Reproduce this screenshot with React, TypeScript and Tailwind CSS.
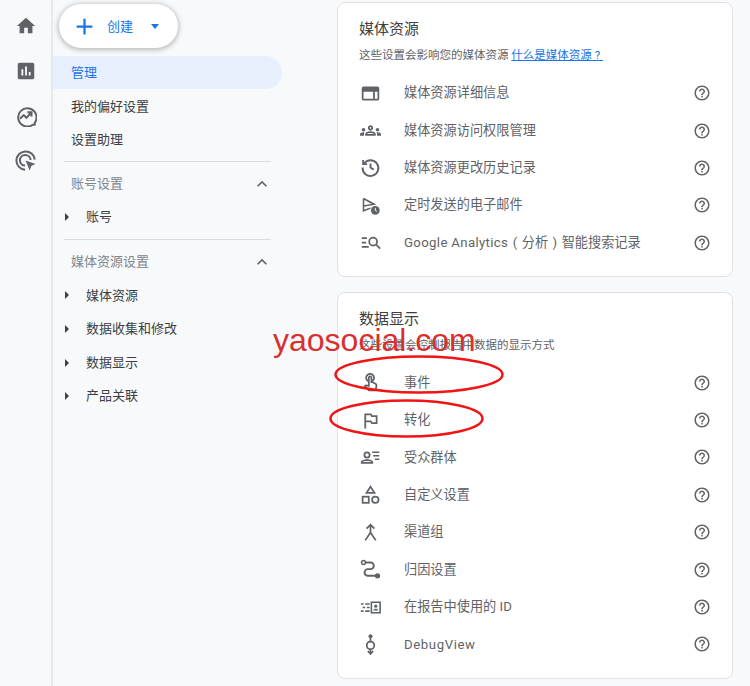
import type { ReactNode } from "react";

const iconCls = "w-full h-full";

const Fill = ({ d }: { d: string }) => (
  <svg viewBox="0 0 24 24" className={iconCls} fill="currentColor"><path d={d} /></svg>
);

const Line = ({ children, width = 2 }: { children: ReactNode; width?: number }) => (
  <svg viewBox="0 0 24 24" className={iconCls} fill="none" stroke="currentColor" strokeWidth={width}>{children}</svg>
);

const HelpIcon = () => (
  <Fill d="M11 18h2v-2h-2v2zm1-16C6.48 2 2 6.48 2 12s4.48 10 10 10 10-4.48 10-10S17.52 2 12 2zm0 18c-4.41 0-8-3.59-8-8s3.59-8 8-8 8 3.59 8 8-3.59 8-8 8zm0-14c-2.21 0-4 1.79-4 4h2c0-1.1.9-2 2-2s2 .9 2 2c0 2-3 1.75-3 5h2c0-2.25 3-2.5 3-5 0-2.21-1.79-4-4-4z" />
);

// parens sit centered in a full-width cell in the reference
const Cell = ({ children }: { children: string }) => (
  <span className="inline-block text-center w-[13.500px]">{children}</span>
);

const propertyRows: { id: string; label: ReactNode; icon: ReactNode }[] = [
  {
    id: "details",
    label: "媒体资源详细信息",
    icon: (
      <svg viewBox="0 0 24 24" className={iconCls} fill="currentColor">
        <path d="M4 4h16a2 2 0 0 1 2 2v12a2 2 0 0 1-2 2H4a2 2 0 0 1-2-2V6a2 2 0 0 1 2-2zm0 6v8h11v-8H4zm13 0v8h3v-8h-3z" fillRule="evenodd" />
      </svg>
    ),
  },
  {
    id: "access",
    label: "媒体资源访问权限管理",
    icon: (
      <Fill d="M4 13c1.1 0 2-.9 2-2s-.9-2-2-2-2 .9-2 2 .9 2 2 2zm1.13 1.1c-.37-.06-.74-.1-1.13-.1-.99 0-1.93.21-2.78.58C.48 14.9 0 15.62 0 16.43V18h4.5v-1.61c0-.83.23-1.61.63-2.29zM20 13c1.1 0 2-.9 2-2s-.9-2-2-2-2 .9-2 2 .9 2 2 2zm4 3.43c0-.81-.48-1.53-1.22-1.85-.85-.37-1.79-.58-2.78-.58-.39 0-.76.04-1.13.1.4.68.63 1.46.63 2.29V18H24v-1.57zm-7.76-2.78c-1.17-.52-2.61-.9-4.24-.9-1.63 0-3.07.39-4.24.9C6.68 14.13 6 15.21 6 16.39V18h12v-1.61c0-1.18-.68-2.26-1.76-2.74zM8.07 16c.09-.23.13-.39.91-.69.97-.38 1.99-.56 3.02-.56s2.05.18 3.02.56c.77.3.81.46.91.69H8.07zM12 8c.55 0 1 .45 1 1s-.45 1-1 1-1-.45-1-1 .45-1 1-1m0-2c-1.66 0-3 1.34-3 3s1.34 3 3 3 3-1.34 3-3-1.34-3-3-3z" />
    ),
  },
  {
    id: "history",
    label: "媒体资源更改历史记录",
    icon: (
      <Line width={2.2}>
        <path d="M4.6 7.5A9 9 0 1 1 3 12" />
        <path d="M3.6 3.5v4.6h4.6" />
        <path d="M12 7.5V12l3.6 2.4" />
      </Line>
    ),
  },
  {
    id: "emails",
    label: "定时发送的电子邮件",
    icon: (
      <svg viewBox="0 0 24 24" className={iconCls}>
        <path d="M4 4v14l8-3M4 4l12 6.500L4 12.500" fill="none" stroke="currentColor" strokeWidth="1.800" />
        <circle cx="17.500" cy="17.500" r="5" fill="currentColor" />
        <path d="M17.500 14.800v2.900l1.800 1" fill="none" stroke="#fff" strokeWidth="1.100" />
      </svg>
    ),
  },
  {
    id: "search",
    label: (
      <>
        <span className="tracking-[0.35px]">Google Analytics</span>
        <Cell>(</Cell>分析<Cell>)</Cell>智能搜索记录
      </>
    ),
    icon: (
      <Line>
        <path d="M2 7h6M2 12h5M2 17h8" />
        <circle cx="15" cy="11" r="4.500" />
        <path d="M18.500 14.500L23 19" />
      </Line>
    ),
  },
];

const displayRows: { id: string; label: ReactNode; icon: ReactNode }[] = [
  {
    id: "events",
    label: "事件",
    icon: (
      <Fill d="M18.190 12.440l-3.240-1.620c1.290-1 2.120-2.560 2.120-4.320 0-3.030-2.470-5.500-5.500-5.500s-5.500 2.470-5.500 5.500c0 2.130 1.220 3.980 3 4.890v3.260c-2.150-.46-2.020-.44-2.260-.44-.53 0-1.030.21-1.410.59L4 16.220l5.090 5.090C9.520 21.750 10.120 22 10.740 22h6.300c.98 0 1.810-.7 1.970-1.670l.8-4.710c.22-1.300-.43-2.580-1.620-3.180zm-.35 2.850l-.8 4.710h-6.300c-.09 0-.17-.04-.24-.1l-3.680-3.680 4.250.89V6.500c0-.28.22-.5.5-.5s.5.22.5.5v6h1.760l3.460 1.730c.4.2.62.63.55 1.060zM8.070 6.500c0-1.930 1.570-3.500 3.500-3.500s3.500 1.570 3.500 3.500c0 .95-.38 1.810-1 2.440V6.500c0-1.380-1.120-2.500-2.500-2.500s-2.500 1.120-2.500 2.500v2.440c-.62-.63-1-1.490-1-2.440z" />
    ),
  },
  {
    id: "conversions",
    label: "转化",
    icon: <Fill d="M14 6l-1-2H5v17h2v-7h5l1 2h7V6h-6zm4 8h-4l-1-2H7V6h5l1 2h5v6z" />,
  },
  {
    id: "audiences",
    label: "受众群体",
    icon: (
      <svg viewBox="0 0 24 24" className={iconCls} fill="currentColor">
        <circle cx="8" cy="9" r="3" fill="none" stroke="currentColor" strokeWidth="2" />
        <path d="M1 19v-1.500C1 15 5 14 8 14s7 1 7 3.500V19H1zm2-2h10c-.4-.6-2.600-1-5-1s-4.600.4-5 1z" fillRule="evenodd" />
        <path d="M14 5h8v1.800h-8zM15 9h7v1.800h-7zM17 13h5v1.800h-5z" />
      </svg>
    ),
  },
  {
    id: "custom",
    label: "自定义设置",
    icon: (
      <Line>
        <path d="M12 3l4.500 7h-9z" />
        <rect x="3" y="14.500" width="7" height="7" />
        <circle cx="17.500" cy="18" r="3.700" />
      </Line>
    ),
  },
  {
    id: "channels",
    label: "渠道组",
    icon: (
      <Line>
        <path d="M12 3v9l-6 9M12 12l6 9M7.500 7.500L12 3l4.500 4.500" />
      </Line>
    ),
  },
  {
    id: "attribution",
    label: "归因设置",
    icon: (
      <svg viewBox="0 0 24 24" className={iconCls}>
        <path d="M6 4h6a3.800 3.800 0 0 1 0 7.600H9a3.800 3.800 0 0 0 0 7.600h9" fill="none" stroke="currentColor" strokeWidth="2.200" />
        <circle cx="4" cy="4" r="2.300" fill="#fff" stroke="currentColor" strokeWidth="1.800" />
        <circle cx="20" cy="19.200" r="3" fill="currentColor" />
      </svg>
    ),
  },
  {
    id: "ids",
    label: "在报告中使用的 ID",
    icon: (
      <svg viewBox="0 0 24 24" className={iconCls} fill="currentColor">
        <path d="M1 7h3v1.800H1zM6 7h5v1.800H6zM3 11.100h3v1.800H3zM8 11.100h3v1.800H8zM1 15.200h3V17H1zM6 15.200h5V17H6z" />
        <rect x="13" y="6" width="10" height="12" fill="none" stroke="currentColor" strokeWidth="1.800" />
        <circle cx="18" cy="10.500" r="1.800" />
        <path d="M15 15.500c.4-1.500 1.600-2 3-2s2.600.5 3 2z" />
      </svg>
    ),
  },
  {
    id: "debug",
    label: <span className="tracking-[0.6px]">DebugView</span>,
    icon: (
      <svg viewBox="0 0 24 24" className={iconCls} fill="none" stroke="currentColor" strokeWidth="2">
        <path d="M12 2v7M12 17v6" />
        <circle cx="12" cy="2.500" r="2.300" fill="currentColor" stroke="none" />
        <circle cx="12" cy="13" r="4.300" />
        <path d="M9 19.500l3 3 3-3" />
      </svg>
    ),
  },
];

const railIcons: { key: string; icon: ReactNode }[] = [
  { key: "home", icon: <Fill d="M10 20v-6h4v6h5v-8h3L12 3 2 12h3v8z" /> },
  {
    key: "reports",
    icon: (
      <Fill d="M19 3H5c-1.100 0-2 .9-2 2v14c0 1.100.9 2 2 2h14c1.100 0 2-.9 2-2V5c0-1.100-.9-2-2-2zM9 17H7v-7h2v7zm4 0h-2V7h2v10zm4 0h-2v-4h2v4z" />
    ),
  },
  {
    key: "explore",
    icon: (
      <Line width={2.200}>
        <path d="M21.500 19.500A10 10 0 1 0 19.500 21.500h2z" />
        <path d="M5.500 15l4-4 3 3 5-5.500M13.500 8h4.500v4.500" />
      </Line>
    ),
  },
  {
    key: "advertising",
    icon: (
      <svg viewBox="0 0 24 24" className={iconCls}>
        <path d="M11 21.500a10 10 0 1 1 10.500-11" fill="none" stroke="currentColor" strokeWidth="2.200" />
        <path d="M11 17a5.800 5.800 0 1 1 6-6" fill="none" stroke="currentColor" strokeWidth="2.200" />
        <path d="M11.500 11.500l11 3.800-4.500 2-2 5z" fill="currentColor" />
      </svg>
    ),
  },
];

const Chevron = () => (
  <svg viewBox="0 0 24 24" className="w-[20px] h-[20px] text-[#5f6368]" fill="currentColor">
    <path d="M12 8l-6 6 1.410 1.410L12 10.830l4.590 4.580L18 14z" />
  </svg>
);

const TreeItem = ({ label }: { label: string }) => (
  <div className="flex items-center h-[33.600px] pl-[12px] text-[13px] text-[#3c4043]">
    <span className="w-0 h-0 border-y-[4px] border-y-transparent border-l-[4px] border-l-[#3c4043]" />
    <span className="ml-[17px]">{label}</span>
  </div>
);

const Row = ({ label, icon }: { label: ReactNode; icon: ReactNode }) => (
  <div className="flex items-center h-[37.400px] text-[#5f6368]">
    <div className="ml-[1px] w-[21px] h-[21px] shrink-0">{icon}</div>
    <span className="ml-[23px] flex-1 text-[13.200px]">{label}</span>
    <div className="w-[18px] h-[18px] shrink-0">
      <HelpIcon />
    </div>
  </div>
);

const Card = ({ title, subtitle, children, className }: { title: string; subtitle: ReactNode; children: ReactNode; className: string }) => (
  <section className={`bg-white border border-[#dfe1e5] rounded-[8px] pl-[21px] pr-[21px] pt-[15px] ${className}`}>
    <h2 className="text-[15px] leading-[22px] text-[#3c4043]">{title}</h2>
    <p className="mt-[6px] mb-[10px] text-[11.500px] leading-[18px] text-[#5f6368]">{subtitle}</p>
    {children}
  </section>
);

export default function App() {
  return (
    <div
      className="relative flex w-[750px] h-[686px] overflow-hidden bg-[#f8f9fb]"
      style={{ fontFamily: 'Roboto, "Noto Sans CJK SC", sans-serif' }}
    >
      <nav className="w-[53px] shrink-0 border-r-2 border-[#e6e8eb] flex flex-col items-center pl-[1px] pt-[15px] gap-[23px] text-[#5f6368]">
        {railIcons.map((r) => (
          <div key={r.key} className="w-[22px] h-[22px]">{r.icon}</div>
        ))}
      </nav>

      <aside className="w-[229px] shrink-0">
        <div className="ml-[6px] mt-[4px] mb-[8px] flex items-center w-[119px] h-[44px] rounded-full bg-white shadow-[0_1px_5px_1px_rgba(60,64,67,0.35)] text-[#1a73e8]">
          <svg viewBox="0 0 24 24" className="ml-[12px] w-[27px] h-[27px]" fill="currentColor">
            <path d="M19 13h-6v6h-2v-6H5v-2h6V5h2v6h6v2z" />
          </svg>
          <span className="ml-[9px] text-[13px] pt-[1px]">创建</span>
          <span className="ml-[18px] w-0 h-0 border-x-[4.500px] border-x-transparent border-t-[5px] border-t-[#1a73e8]" />
        </div>

        <div className="flex items-center h-[33px] pl-[18px] pt-[1px] rounded-r-full bg-[#e8f0fe] text-[13px] text-[#1a73e8]">管理</div>
        <div className="flex items-center h-[34px] pl-[18px] pt-[1px] text-[13px] text-[#3c4043]">我的偏好设置</div>
        <div className="flex items-center h-[33px] pl-[18px] pt-[1px] text-[13px] text-[#3c4043]">设置助理</div>

        <div className="mt-[5px] ml-[11px] w-[207px] border-t border-[#dadce0]" />
        <div className="flex items-center justify-between h-[38px] pt-[6px] pl-[18px] pr-[10px] text-[13px] text-[#80868b]">
          账号设置
          <Chevron />
        </div>
        <TreeItem label="账号" />

        <div className="mt-[5px] ml-[11px] w-[207px] border-t border-[#dadce0]" />
        <div className="flex items-center justify-between h-[39px] pt-[5px] pl-[18px] pr-[10px] text-[13px] text-[#80868b]">
          媒体资源设置
          <Chevron />
        </div>
        <TreeItem label="媒体资源" />
        <TreeItem label="数据收集和修改" />
        <TreeItem label="数据显示" />
        <TreeItem label="产品关联" />
      </aside>

      <main className="flex-1 pl-[55px] pr-[17px] pt-[2px] flex flex-col gap-[15px]">
        <Card
          title="媒体资源"
          className="h-[275px]"
          subtitle={
            <>
              这些设置会影响您的媒体资源{" "}
              <span className="text-[#1a73e8] underline">什么是媒体资源{"\u00a0?\u00a0"}</span>
            </>
          }
        >
          <div className="pt-[0.5px]">
            {propertyRows.map((r) => <Row key={r.id} label={r.label} icon={r.icon} />)}
          </div>
        </Card>
        <Card title="数据显示" subtitle="这些设置会控制报告中数据的显示方式" className="h-[387px]">
          {displayRows.map((r) => <Row key={r.id} label={r.label} icon={r.icon} />)}
        </Card>
      </main>

      <div
        className="absolute left-[273px] top-[320px] text-[32px] leading-[40px] text-[#d92f2f]"
        style={{ fontFamily: '"Liberation Sans", sans-serif' }}
      >
        yaosocial.com
      </div>
      <svg className="absolute left-[325px] top-[350px] w-[185px] h-[92px]" viewBox="325 350 185 92" fill="none" stroke="#f01414" strokeWidth="2.500">
        <ellipse cx="419" cy="374.500" rx="83.500" ry="18" />
        <ellipse cx="406.500" cy="418.500" rx="76" ry="18" />
      </svg>
    </div>
  );
}
